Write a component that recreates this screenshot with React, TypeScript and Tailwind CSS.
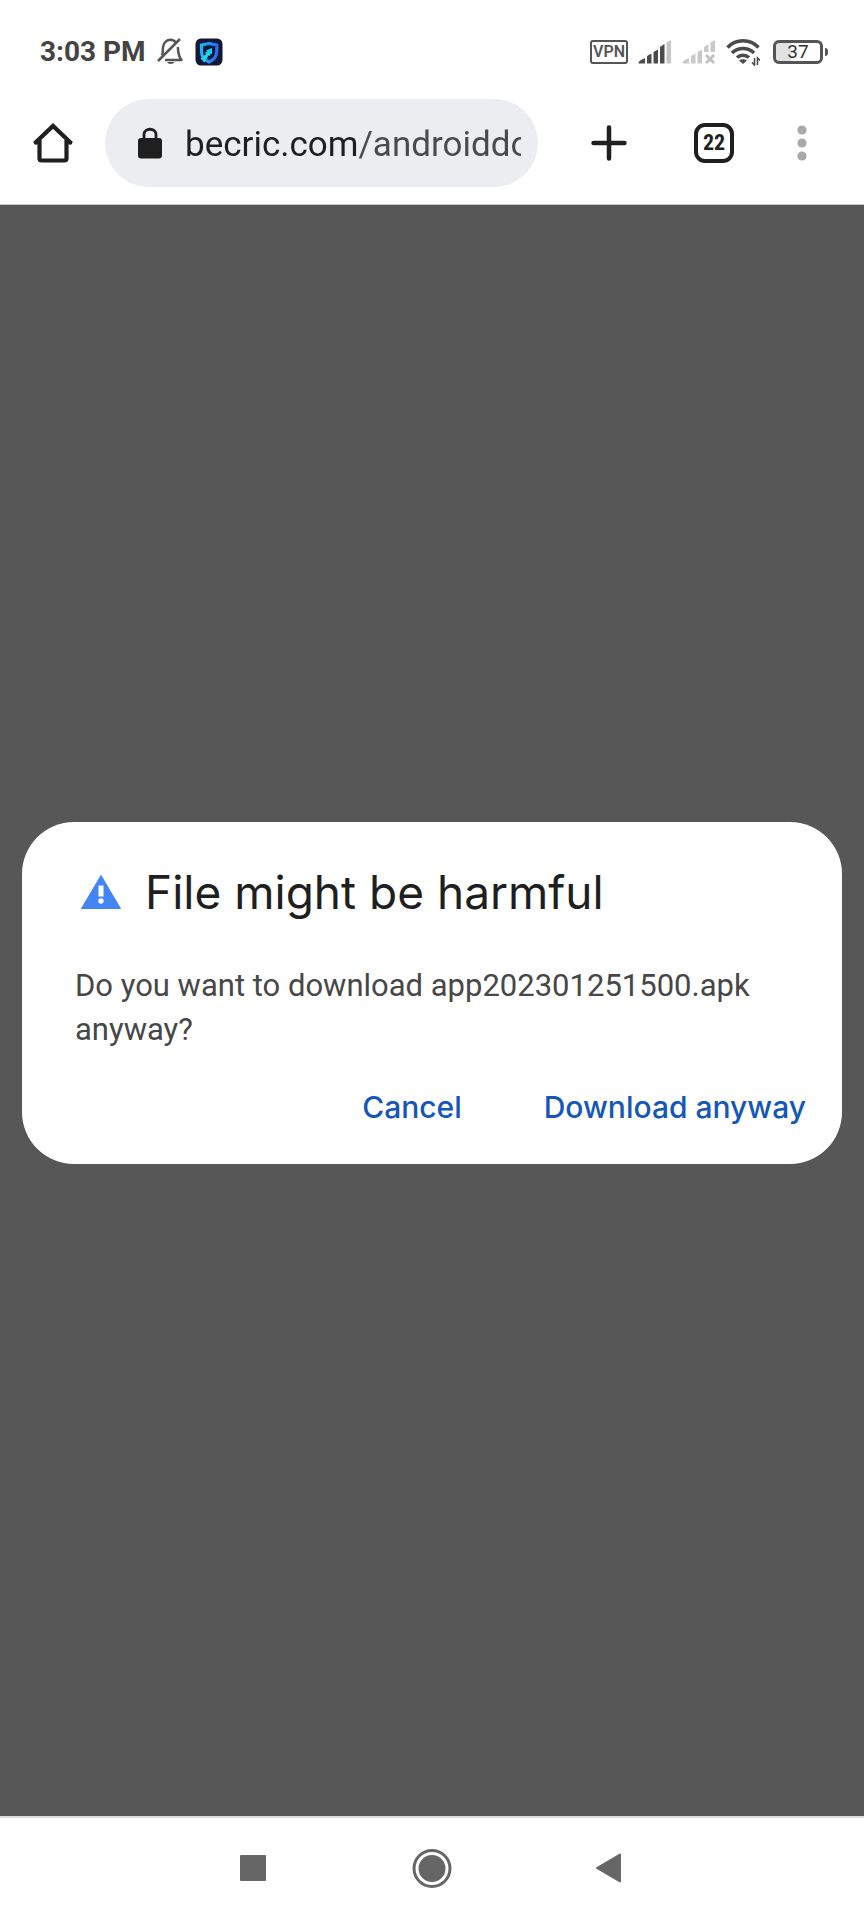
import React from 'react';

const BellOff = () => (
  <svg width="28" height="28" viewBox="0 0 28 28" fill="none" stroke="#555" strokeWidth="2.500">
    <path d="M6 17.500C6.800 15.500 6.800 13 7 9.500C7.200 5.500 10 2 14 1.800C16.500 1.800 18.500 2.800 20 4.500" />
    <path d="M21.800 9C22.300 12 21.600 17 25.500 22H9" strokeLinejoin="round" />
    <path d="M2 23L24 1" />
    <path d="M11 24H18.500C17.500 26.500 12 26.500 11 24Z" fill="#555" stroke="none" />
  </svg>
);

const ShieldApp = () => (
  <svg width="28" height="28" viewBox="0 0 28 28">
    <defs>
      <linearGradient id="shield" x1="0" y1="0" x2="1" y2="0">
        <stop offset="0" stopColor="#1fb3ee" />
        <stop offset="1" stopColor="#2a6df5" />
      </linearGradient>
    </defs>
    <rect x="0.500" y="0.500" width="27" height="27" rx="5.500" fill="#131834" />
    <path
      d="M14 5.500L6.500 7V13.500C6.500 18.500 9.500 22 14 24C18.500 22 21.800 18.500 21.800 13.500V7Z"
      fill="#101a3c"
      stroke="url(#shield)"
      strokeWidth="3.200"
    />
    <path d="M17 10L11 12.500L12.500 13.500L10 14.500L11 16L5.500 20.500L9.500 24.500L13.500 17.500L15 18L15.500 15.500L17 16.500Z" fill="#22d3ee" />
  </svg>
);

const Signal = () => (
  <svg width="34" height="26" viewBox="0 0 34 26" fill="#4b4b4b">
    <path d="M0.500 24.500C0.500 22 3 21 7 19V24.500Z" />
    <path d="M9 17L13.500 14.500V24.500H9Z" />
    <path d="M15.500 13L20 10.500V24.500H15.500Z" />
    <path d="M22 8L26.500 5V24.500H22Z" />
    <path d="M28.500 3.500L33 1V24.500H28.500Z" fill="#c6c6c6" />
  </svg>
);

const SignalNone = () => (
  <svg width="34" height="26" viewBox="0 0 34 26" fill="#c9c9c9">
    <path d="M0.500 24.500C0.500 22 3 21 7 19V24.500Z" />
    <path d="M9 17L13.500 14.500V24.500H9Z" />
    <path d="M15.500 13L20 10.500V24.500H15.500Z" />
    <path d="M22 8L26.500 5V13H22Z" />
    <path d="M28.500 3.500L33 1V13H28.500Z" />
    <path d="M24 16L32 24M32 16L24 24" stroke="#c0c0c0" strokeWidth="2.800" />
  </svg>
);

const Wifi = () => (
  <svg width="34" height="28" viewBox="0 0 34 28" fill="none" stroke="#4b4b4b" strokeWidth="3.600">
    <path d="M1.500 9.500C10 0.500 24 0.500 32.500 9.500" />
    <path d="M6 15C12 9 22 9 28 15" />
    <path d="M11 19.500C14.500 16.500 19.500 16.500 23 19.500" />
    <path d="M13 22.500C15.500 20.800 18.500 20.800 21 22.500L17 26Z" fill="#4b4b4b" stroke="none" />
    <path d="M28.500 20V27L26 24.500M31.500 27V20L34 22.500" strokeWidth="1.600" />
  </svg>
);

const StatusBar = () => (
  <header className="flex h-[82px] items-center justify-between pt-[21px] pr-[36px] pl-10">
    <div className="flex items-center">
      <span className="text-[28px] leading-8 font-bold text-[#444]">3:03 PM</span>
      <span className="ml-[10px] flex items-center gap-[11px]">
        <BellOff />
        <ShieldApp />
      </span>
    </div>
    <div className="flex items-center gap-[10px]">
      <span className="flex h-6 w-[38px] items-center justify-center rounded-[3px] border-2 border-[#555] text-[16px] leading-4 font-semibold text-[#555]">
        VPN
      </span>
      <Signal />
      <SignalNone />
      <Wifi />
      <span className="ml-[3px] flex items-center gap-[2px]">
        <span className="flex h-6 w-[50px] items-center justify-center rounded-[6px] border-3 border-[#555] bg-linear-to-r from-[#e2e2e2] from-35% to-white to-35% text-[19px] leading-4 text-[#333]">
          37
        </span>
        <span className="h-2 w-[3px] rounded-r-sm bg-[#555]" />
      </span>
    </div>
  </header>
);

const Toolbar = () => (
  <nav className="flex h-[123px] items-center border-b border-[#c4c4c4] pr-[42px] pl-[33px]">
    <button type="button" aria-label="Home">
      <svg width="40" height="40" viewBox="0 0 40 40" fill="none" stroke="#1f1f1f" strokeWidth="4.200">
        <path d="M1.500 20.500L20 3L38.500 20.500" />
        <path d="M6.500 17V35.500Q6.500 37.500 8.500 37.500H31.500Q33.500 37.500 33.500 35.500V17" />
        <path d="M1 19.800H7M33 19.800H39" strokeWidth="3" />
      </svg>
    </button>
    <div className="ml-8 flex h-[88px] min-w-0 flex-1 items-center rounded-full bg-[#ecedf1] pr-[17px] pl-8">
      <svg className="shrink-0" width="26" height="32" viewBox="0 0 26 32">
        <path d="M7 13V7.500C7 0.500 19 0.500 19 7.500V13" fill="none" stroke="#1f1f1f" strokeWidth="2.800" />
        <rect x="1" y="11" width="24" height="20.500" rx="3" fill="#1f1f1f" />
      </svg>
      <input
        type="text"
        aria-label="Address"
        defaultValue="becric.com/androiddo"
        className="ml-[22px] w-full min-w-0 bg-linear-to-r from-[#1f1f1f] from-[174px] to-[#4a4a4a] to-[174px] bg-clip-text pt-1 text-[35px] leading-[44px] text-transparent outline-none"
      />
    </div>
    <button type="button" aria-label="New tab" className="ml-[51px]">
      <svg width="40" height="40" viewBox="0 0 40 40" stroke="#1f1f1f" strokeWidth="4.500" strokeLinecap="round">
        <path d="M20 4.500V35.500M4.500 20H35.500" />
      </svg>
    </button>
    <button
      type="button"
      aria-label="Tabs"
      className="ml-[65px] flex size-10 items-center justify-center rounded-[11px] border-4 border-[#1f1f1f] font-['Roboto_Condensed',Roboto,sans-serif] text-[22px] leading-6 font-bold text-[#1f1f1f]"
    >
      22
    </button>
    <button type="button" aria-label="More" className="ml-12">
      <svg width="40" height="40" viewBox="0 0 40 40" fill="#a9a9a9">
        <circle cx="20" cy="7" r="4.600" />
        <circle cx="20" cy="20" r="4.600" />
        <circle cx="20" cy="33" r="4.600" />
      </svg>
    </button>
  </nav>
);

const Dialog = () => (
  <section
    role="alertdialog"
    aria-labelledby="dialog-title"
    aria-describedby="dialog-text"
    className="w-full rounded-[52px] bg-white pt-10 pb-6"
  >
    <div className="flex items-center gap-6 px-[59px]">
      <svg width="40" height="34" viewBox="0 0 40 34">
        <path d="M20 0.500L39.500 33.500H0.500Z" fill="#4385f5" stroke="#4385f5" strokeLinejoin="round" />
        <path d="M17.500 10.500H22.500V21.500H17.500Z" fill="#fff" />
        <circle cx="20" cy="26" r="2.700" fill="#fff" />
      </svg>
      <h1 id="dialog-title" className="font-[Inter,sans-serif] text-[46px] leading-[60px] text-[#1f1f1f]">
        File might be harmful
      </h1>
    </div>
    <p id="dialog-text" className="mt-[42px] px-[53px] text-[31px] leading-[44px] text-[#474747]">
      Do you want to download app202301251500.apk anyway?
    </p>
    <div className="mt-[22px] flex justify-end gap-[82px] pr-9 font-[Inter,sans-serif] text-[30px] leading-[66px] font-medium text-[#1557b8]">
      <button type="button">Cancel</button>
      <button type="button">Download anyway</button>
    </div>
  </section>
);

const SystemNav = () => (
  <nav className="flex h-[104px] items-center justify-between border-t-2 border-[#dcdcdc] px-[232px]">
    <button type="button" aria-label="Recent apps">
      <svg width="40" height="40" viewBox="0 0 40 40" fill="#666">
        <rect x="8" y="6" width="26" height="26" rx="1" />
      </svg>
    </button>
    <button type="button" aria-label="Home screen">
      <svg width="40" height="40" viewBox="0 0 40 40" fill="#666">
        <circle cx="20" cy="19.500" r="18" fill="none" stroke="#666" strokeWidth="3" />
        <circle cx="20" cy="19.500" r="13.500" />
      </svg>
    </button>
    <button type="button" aria-label="Back">
      <svg width="40" height="40" viewBox="0 0 40 40" fill="#666" stroke="#666" strokeWidth="2" strokeLinejoin="round">
        <path d="M5 19L28 5.500V32.500Z" />
      </svg>
    </button>
  </nav>
);

export default function App() {
  return (
    <div className="flex min-h-screen flex-col bg-white font-[Roboto,sans-serif]">
      <StatusBar />
      <Toolbar />
      <main className="flex flex-1 flex-col justify-center bg-[#575757] px-[22px] pb-9">
        <Dialog />
      </main>
      <SystemNav />
    </div>
  );
}
